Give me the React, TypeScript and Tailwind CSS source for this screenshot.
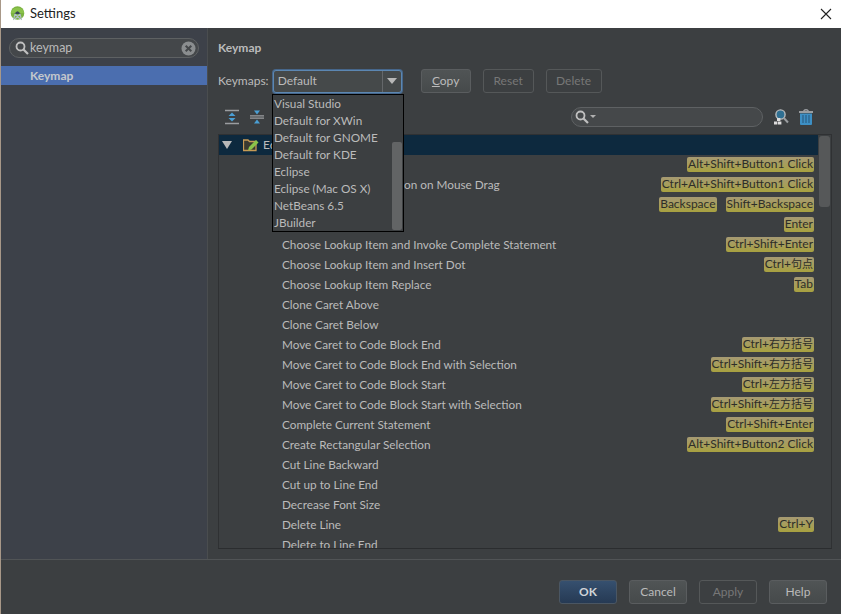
import React from "react";

type Row = { t: string; k?: string[] };
const rows: Row[] = [
  { t: "Add or Remove Caret", k: ["Alt+Shift+Button1 Click"] },
  { t: "Add Rectangular Selection on Mouse Drag", k: ["Ctrl+Alt+Shift+Button1 Click"] },
  { t: "Backspace", k: ["Backspace", "Shift+Backspace"] },
  { t: "Choose Lookup Item", k: ["Enter"] },
  { t: "Choose Lookup Item and Invoke Complete Statement", k: ["Ctrl+Shift+Enter"] },
  { t: "Choose Lookup Item and Insert Dot", k: ["Ctrl+|句点"] },
  { t: "Choose Lookup Item Replace", k: ["Tab"] },
  { t: "Clone Caret Above" },
  { t: "Clone Caret Below" },
  { t: "Move Caret to Code Block End", k: ["Ctrl+|右方括号"] },
  { t: "Move Caret to Code Block End with Selection", k: ["Ctrl+Shift+|右方括号"] },
  { t: "Move Caret to Code Block Start", k: ["Ctrl+|左方括号"] },
  { t: "Move Caret to Code Block Start with Selection", k: ["Ctrl+Shift+|左方括号"] },
  { t: "Complete Current Statement", k: ["Ctrl+Shift+Enter"] },
  { t: "Create Rectangular Selection", k: ["Alt+Shift+Button2 Click"] },
  { t: "Cut Line Backward" },
  { t: "Cut up to Line End" },
  { t: "Decrease Font Size" },
  { t: "Delete Line", k: ["Ctrl+Y"] },
  { t: "Delete to Line End" },
];

const options = ["Visual Studio", "Default for XWin", "Default for GNOME", "Default for KDE", "Eclipse", "Eclipse (Mac OS X)", "NetBeans 6.5", "JBuilder"];

function Btn({ children, dim, primary, w = "w-[68px]" }: { children: React.ReactNode; dim?: boolean; primary?: boolean; w?: string }) {
  return (
    <div
      className={`${w} h-[24px] flex items-center justify-center rounded-[3px] border text-[12px] ${
        primary
          ? "border-[#4a5663] bg-gradient-to-b from-[#36506f] to-[#263a54] text-[#d0d4d8] font-bold"
          : dim
          ? "border-[#555859] text-[#777]"
          : "border-[#5a5d5f] bg-gradient-to-b from-[#505455] to-[#464a4b] text-[#bbb]"
      }`}
    >
      {children}
    </div>
  );
}

function SearchIcon({ c = "#c0c0c0" }: { c?: string }) {
  return (
    <svg width="14" height="14" viewBox="0 0 14 14" fill="none">
      <circle cx="5.5" cy="5.5" r="4" stroke={c} strokeWidth="1.8" />
      <path d="M8.5 8.5 L13 13" stroke={c} strokeWidth="2.2" />
    </svg>
  );
}

export default function App() {
  return (
    <div className="w-[841px] h-[614px] overflow-hidden flex flex-col bg-[#3c3f41] border-l border-l-[#a89888] text-[#bbbbbb] text-[12px] font-['Lato','Noto_Sans_CJK_SC',sans-serif]">
      <div className="h-[28px] shrink-0 bg-white flex items-center pl-[9px] pr-[9px] text-[#222]">
        <svg width="15" height="16" viewBox="0 0 15 16">
          <circle cx="7.5" cy="7" r="6.8" fill="#7cb342" />
          <path d="M0.9 7 A6.8 6.8 0 0 1 14.1 7 Z" fill="#8bc34a" />
          <path d="M4.5 8 Q7.5 2.5 10.5 8 Z" fill="#37474f" />
          <path d="M5 8 L3.5 14 M10 8 L11.5 14 M5 8 L10 13 M10 8 L5 13" stroke="#b0bec5" strokeWidth="1.1" fill="none" />
        </svg>
        <span className="ml-[5px] text-[13px]">Settings</span>
        <svg className="ml-auto" width="12" height="12" viewBox="0 0 12 12">
          <path d="M1 1 L11 11 M11 1 L1 11" stroke="#222" strokeWidth="1.1" />
        </svg>
      </div>

      <div className="flex-1 flex min-h-0">
        <div className="w-[207px] shrink-0 bg-[#3d4149] border-r border-r-[#4a4d4f] flex flex-col">
          <div className="h-[38px] flex items-center pl-[8px] pr-[8px] pt-[2px]">
            <div className="w-full h-[20px] rounded-full border border-[#5e6163] bg-[#44474a] flex items-center pl-[5px] pr-[2px] text-[#bbb] text-[12.5px]">
              <SearchIcon />
              <span className="ml-[1px]">keymap</span>
              <svg className="ml-auto" width="15" height="15" viewBox="0 0 15 15">
                <circle cx="7.5" cy="7.5" r="7" fill="#8a8d8f" />
                <path d="M4.7 4.7 L10.3 10.3 M10.3 4.7 L4.7 10.3" stroke="#44474a" strokeWidth="2" />
              </svg>
            </div>
          </div>
          <div className="h-[19px] bg-[#4b6eaf] pl-[29px] flex items-center font-bold text-[#c4c8cc]">Keymap</div>
        </div>

        <div className="flex-1 min-w-0 flex flex-col pl-[10px] pr-[8px] relative">
          <div className="h-[39px] flex items-center pt-[1px] font-bold text-[12px]">Keymap</div>
          <div className="h-[28px] flex items-center">
            <span>Keymaps:</span>
            <div className="ml-[4px] w-[129px] h-[23px] rounded-[3px] border border-[#5c87b2] ring-1 ring-[#46668a] bg-[#45494a] flex items-center pl-[4px]">
              <span className="flex-1">Default</span>
              <div className="w-[19px] h-full border-l border-[#64676a] flex items-center justify-center">
                <div className="w-0 h-0 border-l-[5px] border-r-[5px] border-t-[6px] border-l-transparent border-r-transparent border-t-[#b8b8b8]" />
              </div>
            </div>
            <div className="ml-[19px] flex gap-[12px]">
              <Btn w="w-[50px]"><span><u>C</u>opy</span></Btn>
              <Btn w="w-[51px]" dim>Reset</Btn>
              <Btn w="w-[56px]" dim>Delete</Btn>
            </div>
          </div>

          <div className="h-[39px] flex items-center pl-[7px] pr-[20px] pt-[4px]">
            <svg width="14" height="16" viewBox="0 0 14 16">
              <path d="M0 1.5 H14 M0 14.5 H14" stroke="#9a9da0" strokeWidth="1.4" />
              <path d="M7 3.5 L10.5 7 H3.5 Z M7 12.5 L10.5 9 H3.5 Z" fill="#4a9fd4" />
            </svg>
            <svg className="ml-[11px]" width="14" height="16" viewBox="0 0 14 16">
              <path d="M0 6.8 H14 M0 9.2 H14" stroke="#9a9da0" strokeWidth="1.2" />
              <path d="M7 5.5 L10 1.5 H4 Z M7 10.5 L10 14.5 H4 Z" fill="#4a9fd4" />
            </svg>
            <div className="ml-auto flex items-center">
              <div className="w-[192px] h-[20px] rounded-full border border-[#5e6163] bg-[#45484a] flex items-center pl-[3px] ">
                <SearchIcon />
                <div className="ml-[1px] w-0 h-0 border-l-[3px] border-r-[3px] border-t-[3px] border-l-transparent border-r-transparent border-t-[#b0b0b0]" />
              </div>
              <svg className="ml-[10px]" width="16" height="17" viewBox="0 0 16 17">
                <circle cx="7.5" cy="6.5" r="4.6" fill="#2f6f92" stroke="#b8bbbd" strokeWidth="1.4" />
                <path d="M10.8 10 L15 14.5" stroke="#9a9da0" strokeWidth="2" />
                <rect x="4" y="10" width="3.4" height="3" fill="#ddd" />
                <rect x="1" y="13.5" width="3.4" height="3" fill="#ddd" />
                <rect x="5" y="13.5" width="3.4" height="3" fill="#ddd" />
              </svg>
              <svg className="ml-[10px]" width="14" height="16" viewBox="0 0 14 16">
                <path d="M4.5 2 Q7 -0.5 9.5 2" stroke="#9a9da0" fill="none" strokeWidth="1.2" />
                <rect x="0" y="2" width="14" height="2" fill="#9a9da0" />
                <path d="M1 4.5 H13 V15 Q13 16 12 16 H2 Q1 16 1 15 Z" fill="#3d8fc4" />
                <path d="M4 6 V14 M7 6 V14 M10 6 V14" stroke="#2b5f85" strokeWidth="1.2" />
              </svg>
            </div>
          </div>

          <div className="h-[415px] w-[614px] border border-[#2f3133] border-b-[#2b2d2f] relative overflow-hidden">
            <div className="h-[20px] w-[599px] bg-[#0d293e] flex items-center pl-[2px]">
              <div className="ml-[1px] w-0 h-0 border-l-[5px] border-r-[5px] border-t-[8px] border-l-transparent border-r-transparent border-t-[#b8b8b8]" />
              <svg className="ml-[11px]" width="16" height="14" viewBox="0 0 16 14">
                <path d="M0.5 2 H5 L6.5 3.5 H13 V12.5 H0.5 Z" fill="#3a3a30" stroke="#c79a55" strokeWidth="1.3" />
                <path d="M5 12.5 L6 9 L13 2 L15.5 4.5 L8.5 11.5 Z" fill="#8bc34a" />
              </svg>
              <span className="ml-[4px]">Editor Actions</span>
            </div>
            {rows.map((r) => (
              <div key={r.t} className="h-[20px] flex items-center pl-[63px] pr-[17px]">
                <span className="whitespace-nowrap text-[11.75px]">{r.t}</span>
                {r.k && (
                  <div className="ml-auto flex gap-[9px]">
                    {r.k.map((k) => {
                      const [latin, cjk] = k.split("|");
                      return (
                        <span key={k} className="h-[15px] mb-[1px] leading-[13px] px-[1px] rounded-[2px] bg-gradient-to-b from-[#a69a72] to-[#a8a13f] text-[#2e2e28] whitespace-nowrap">
                          {latin}
                          {cjk && <span className="text-[11px]">{cjk}</span>}
                        </span>
                      );
                    })}
                  </div>
                )}
              </div>
            ))}
            <div className="absolute right-[1px] top-[1px] w-[11px] h-[71px] rounded-[3px] bg-[#565859]" />
          </div>

          <div className="absolute left-[64px] top-[66px] w-[132px] h-[138px] bg-[#3c3f41] border border-black flex">
            <div className="flex-1 pl-[1px]">
              {options.map((o) => (
                <div key={o} className="h-[17px] flex items-center whitespace-nowrap text-[#bbb] text-[11.75px]">{o}</div>
              ))}
            </div>
            <div className="w-[10px] self-end h-[88px] mb-[1px] mr-[1px] rounded-[2px] bg-[#626465]" />
          </div>
        </div>
      </div>

      <div className="h-[55px] shrink-0 border-t border-t-[#515456] flex items-center justify-end gap-[12px] pr-[14px] pt-[9px]">
        <Btn w="w-[58px]" primary>OK</Btn>
        <Btn w="w-[58px]">Cancel</Btn>
        <Btn w="w-[58px]" dim>Apply</Btn>
        <Btn w="w-[58px]">Help</Btn>
      </div>
    </div>
  );
}
